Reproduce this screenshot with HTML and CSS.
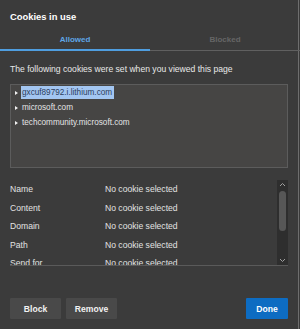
FILE: index.html
```html
<!DOCTYPE html>
<html lang="en">
<head>
  <meta charset="UTF-8" />
  <title>Cookies in use</title>
  <link rel="stylesheet" href="styles.css">
</head>
<body>
  <div class="dialog">
    <h1 class="title">Cookies in use</h1>

    <div class="tabs">
      <div class="tab active">Allowed</div>
      <div class="tab">Blocked</div>
    </div>

    <div class="content">
      <p class="intro">The following cookies were set when you viewed this page</p>

      <div class="tree">
        <div class="tree-row"><span class="arrow"></span><span class="site selected">gxcuf89792.i.lithium.com</span></div>
        <div class="tree-row"><span class="arrow"></span><span class="site">microsoft.com</span></div>
        <div class="tree-row"><span class="arrow"></span><span class="site">techcommunity.microsoft.com</span></div>
      </div>

      <div class="props">
        <div class="props-list">
          <div class="prop"><span class="prop-name">Name</span><span class="prop-value">No cookie selected</span></div>
          <div class="prop"><span class="prop-name">Content</span><span class="prop-value">No cookie selected</span></div>
          <div class="prop"><span class="prop-name">Domain</span><span class="prop-value">No cookie selected</span></div>
          <div class="prop"><span class="prop-name">Path</span><span class="prop-value">No cookie selected</span></div>
          <div class="prop"><span class="prop-name">Send for</span><span class="prop-value">No cookie selected</span></div>
        </div>
        <div class="scrollbar">
          <svg class="chev" width="7" height="5" viewBox="0 0 7 5"><polyline points="1,4 3.5,1.5 6,4" /></svg>
          <div class="thumb"></div>
          <svg class="chev" width="7" height="5" viewBox="0 0 7 5"><polyline points="1,1 3.5,3.5 6,1" /></svg>
        </div>
      </div>
    </div>

    <div class="actions">
      <button class="btn">Block</button>
      <button class="btn">Remove</button>
      <button class="btn primary">Done</button>
    </div>
  </div>
</body>
</html>
```

FILE: styles.css
```css
/* Reset */
* {
  box-sizing: border-box;
  margin: 0;
  padding: 0;
}
html, body {
  background: #3b3b3b;
}
body {
  font-family: "Liberation Sans", Arial, sans-serif;
  font-size: 8.6px;
  color: #e4e4e4;
}
/* Dialog */
.dialog {
  width: 300px;
  min-height: 100vh;
  box-shadow: inset -1px 0 0 #3b3b3b, inset -2px 0 0 #6e6e6e;
}
.title {
  padding: 10px 10px 0;
  font-size: 9.4px;
  line-height: 14px;
  font-weight: bold;
  color: #fff;
}
/* Tabs */
.tabs {
  display: flex;
}
.tab {
  flex: 1;
  text-align: center;
  padding: 10px 0 4px;
  line-height: 12px;
  font-weight: bold;
  font-size: 8px;
  color: #666;
  border-bottom: 1px solid #606060;
}
.tab.active {
  color: #5ea6e6;
  padding-bottom: 3px;
  border-bottom: 2px solid #4f9ee0;
}
/* Content */
.content {
  padding: 12px 12px 0 10px;
}
.intro {
  line-height: 12px;
  color: #e8e8e8;
}
.tree {
  margin-top: 9px;
  height: 84px;
  background: #464544;
  border: 1px solid #5c5c5c;
  font-size: 8.2px;
}
.tree-row {
  display: flex;
  align-items: center;
  height: 15px;
  padding-left: 4px;
}
.arrow {
  width: 0;
  height: 0;
  border-top: 2.5px solid transparent;
  border-bottom: 2.5px solid transparent;
  border-left: 3.5px solid #f0f0f0;
  margin-right: 3px;
}
.site {
  padding: 1px 2px 1px 1px;
  line-height: 11px;
  color: #e4e4e4;
}
.site.selected {
  background: #a3c6f1;
  color: #2c3e5e;
}
/* Properties */
.props {
  margin-top: 12px;
  height: 86px;
  display: flex;
  border-bottom: 1px solid #5a5a5a;
  overflow: hidden;
}
.props-list {
  flex: 1;
}
.prop {
  display: flex;
  height: 18.5px;
  align-items: center;
  color: #e2e2e2;
}
.prop-name {
  width: 95px;
}
.scrollbar {
  width: 11px;
  background: #2e2e2e;
  display: flex;
  flex-direction: column;
  align-items: center;
  padding: 2px 0 2px;
}
.chev {
  fill: none;
  stroke: #a0a0a0;
  stroke-width: 1;
}
.thumb {
  width: 7px;
  height: 40px;
  margin: 4px 0 auto;
  border-radius: 4px;
  background: #575757;
}
/* Buttons */
.actions {
  display: flex;
  gap: 5px;
  padding: 32px 12px 0 10px;
}
.btn {
  height: 21px;
  width: 51px;
  border: none;
  border-radius: 1px;
  background: #494949;
  color: #f2f2f2;
  font-family: inherit;
  font-size: 8.6px;
  font-weight: bold;
}
.btn.primary {
  width: 42px;
  margin-left: auto;
  background: #0d6cc2;
  color: #fff;
}
```
